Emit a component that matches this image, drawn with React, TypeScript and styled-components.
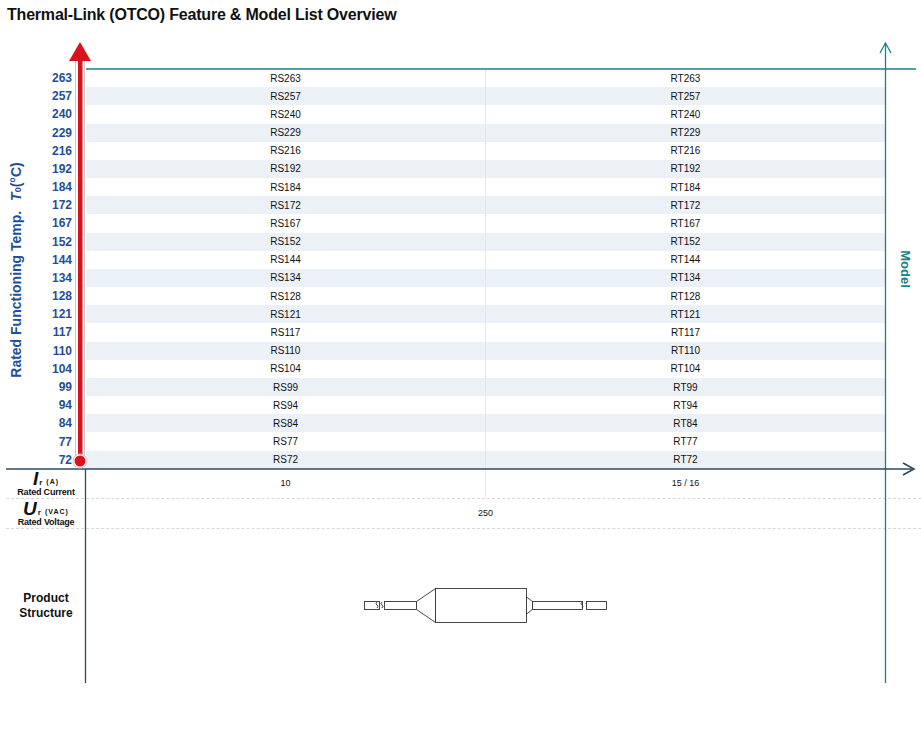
import React from "react";
import styled, { createGlobalStyle } from "styled-components";

const Global = createGlobalStyle`
  html, body { margin: 0; padding: 0; background: #fff; }
  body { font-family: "Liberation Sans", Arial, sans-serif; }
`;

const temps = [263, 257, 240, 229, 216, 192, 184, 172, 167, 152, 144, 134, 128, 121, 117, 110, 104, 99, 94, 84, 77, 72];

const Page = styled.div`
  width: 921px;
  height: 733px;
  position: relative;
  overflow: hidden;
`;
const Title = styled.h1`
  margin: 0;
  padding: 6px 0 0 7px;
  height: 24px;
  font-size: 16px;
  font-weight: bold;
  color: #111;
  letter-spacing: -0.2px;
`;
const Body = styled.div`
  padding-top: 39px;
`;
const Row = styled.div<{ $alt: boolean }>`
  display: grid;
  grid-template-columns: 86px 400px 399px;
  height: 18.18px;
  align-items: center;
  & > div:not(:first-child) { background: ${(p) => (p.$alt ? "#ecf0f7" : "#fff")}; height: 100%; }
`;
const Temp = styled.div`
  text-align: right;
  padding-right: 14px;
  font-size: 12px;
  font-weight: bold;
  color: #1f4e9a;
`;
const Cell = styled.div<{ $split?: boolean }>`
  display: flex;
  align-items: center;
  justify-content: center;
  font-size: 10px;
  color: #111;
  border-right: ${(p) => (p.$split ? "1px solid #e4e7ec" : "none")};
`;
const SpecRow = styled.div`
  display: grid;
  grid-template-columns: 80px 400px 399px;
  margin-left: 6px;
  height: 29px;
  border-bottom: 1px dashed #d8d8d8;
  align-items: center;
`;
const SpecLabel = styled.div`
  display: flex;
  flex-direction: column;
  align-items: center;
  line-height: 1;
`;
const Sym = styled.span`
  font-size: 19px;
  font-style: italic;
  font-weight: bold;
  color: #111;
  & small { font-size: 8px; font-style: normal; margin-left: 1px; }
  & sub { font-size: 7px; font-style: normal; vertical-align: 1px; letter-spacing: 1px; margin-left: 4px; }
`;
const SpecText = styled.span`
  font-size: 9px;
  font-weight: bold;
  color: #111;
  letter-spacing: -0.2px;
`;
const SpecCell = styled(Cell)<{ $span?: boolean }>`
  grid-column: ${(p) => (p.$span ? "2 / 4" : "auto")};
  height: 100%;
  font-size: 9px;
`;
const ProductRow = styled.div`
  display: grid;
  grid-template-columns: 86px 799px;
  height: 154px;
  align-items: center;
`;
const ProductLabel = styled.div`
  text-align: center;
  font-size: 12px;
  font-weight: bold;
  color: #111;
  line-height: 15px;
  padding-left: 6px;
`;
const Drawing = styled.div`
  display: flex;
  justify-content: center;
`;
const Overlay = styled.svg`
  position: absolute;
  left: 0;
  top: 0;
  pointer-events: none;
`;
const YLabel = styled.div`
  position: absolute;
  left: 16px;
  top: 270px;
  transform: translate(-50%, -50%) rotate(-90deg);
  white-space: nowrap;
  font-size: 14px;
  font-weight: bold;
  color: #1f4e9a;
  & i { margin-left: 6px; }
  & small { font-size: 9px; font-style: normal; }
`;
const ModelLabel = styled.div`
  position: absolute;
  left: 905px;
  top: 269px;
  transform: translate(-50%, -50%) rotate(90deg);
  font-size: 13px;
  font-weight: bold;
  color: #1a8189;
`;

const Product = () => (
  <svg width="244" height="36" viewBox="0 0 244 36" fill="#fff" stroke="#333" strokeWidth="0.9">
    <rect x="0.5" y="13.5" width="15" height="8" />
    <path d="M13 14 q-2 2 0 3 q2 1 0 3 M18 14 q-2 2 0 3 q2 1 0 3" fill="none" />
    <rect x="20.5" y="13.5" width="32" height="8" />
    <path d="M52.5 13.5 L71.5 0.5 L71.5 34.5 L52.5 21.5 Z" />
    <rect x="71.5" y="0.5" width="91" height="34" />
    <path d="M162.5 9 L168.5 13.5 L168.5 21.5 L162.5 26 Z" />
    <rect x="168.5" y="13.5" width="50" height="8" />
    <path d="M218 14 q-2 2 0 3 q2 1 0 3 M223 14 q-2 2 0 3 q2 1 0 3" fill="none" />
    <rect x="222.5" y="13.5" width="20" height="8" />
  </svg>
);

export default function App() {
  return (
    <Page>
      <Global />
      <Title>Thermal-Link (OTCO) Feature &amp; Model List Overview</Title>
      <Body>
        {temps.map((t, i) => (
          <Row key={t} $alt={i % 2 === 1}>
            <Temp>{t}</Temp>
            <Cell $split>RS{t}</Cell>
            <Cell>RT{t}</Cell>
          </Row>
        ))}
        <SpecRow>
          <SpecLabel>
            <Sym>I<small>r</small><sub>(A)</sub></Sym>
            <SpecText>Rated Current</SpecText>
          </SpecLabel>
          <SpecCell $split>10</SpecCell>
          <SpecCell>15 / 16</SpecCell>
        </SpecRow>
        <SpecRow>
          <SpecLabel>
            <Sym>U<small>r</small><sub>(VAC)</sub></Sym>
            <SpecText>Rated Voltage</SpecText>
          </SpecLabel>
          <SpecCell $span>250</SpecCell>
        </SpecRow>
        <ProductRow>
          <ProductLabel>Product<br />Structure</ProductLabel>
          <Drawing><Product /></Drawing>
        </ProductRow>
      </Body>
      <YLabel>Rated Functioning Temp. <i>T</i><small>0</small>(°C)</YLabel>
      <ModelLabel>Model</ModelLabel>
      <Overlay width="921" height="733">
        <line x1="86" y1="69" x2="916" y2="69" stroke="#1a8189" strokeWidth="1.3" />
        <line x1="885.5" y1="43" x2="885.5" y2="683" stroke="#1a8189" strokeWidth="1.3" />
        <path d="M880 53 L885.5 43 L891 53" fill="none" stroke="#1a8189" strokeWidth="1.3" />
        <line x1="6" y1="469" x2="914" y2="469" stroke="#2f4a5e" strokeWidth="1.6" />
        <path d="M903 463 L914 469 L903 475" fill="none" stroke="#2f4a5e" strokeWidth="1.6" />
        <line x1="85.5" y1="469" x2="85.5" y2="683" stroke="#2f4a5e" strokeWidth="1.3" />
        <rect x="75.5" y="60" width="9" height="398" fill="#fff" stroke="#c8c8c8" strokeWidth="1" />
        <rect x="78" y="58" width="4.5" height="403" fill="#d7141e" />
        <circle cx="80" cy="461" r="7" fill="#fff" stroke="#c8c8c8" />
        <circle cx="80" cy="461" r="5.5" fill="#d7141e" />
        <path d="M69 61 L80 42 L91 61 Z" fill="#d7141e" />
      </Overlay>
    </Page>
  );
}
